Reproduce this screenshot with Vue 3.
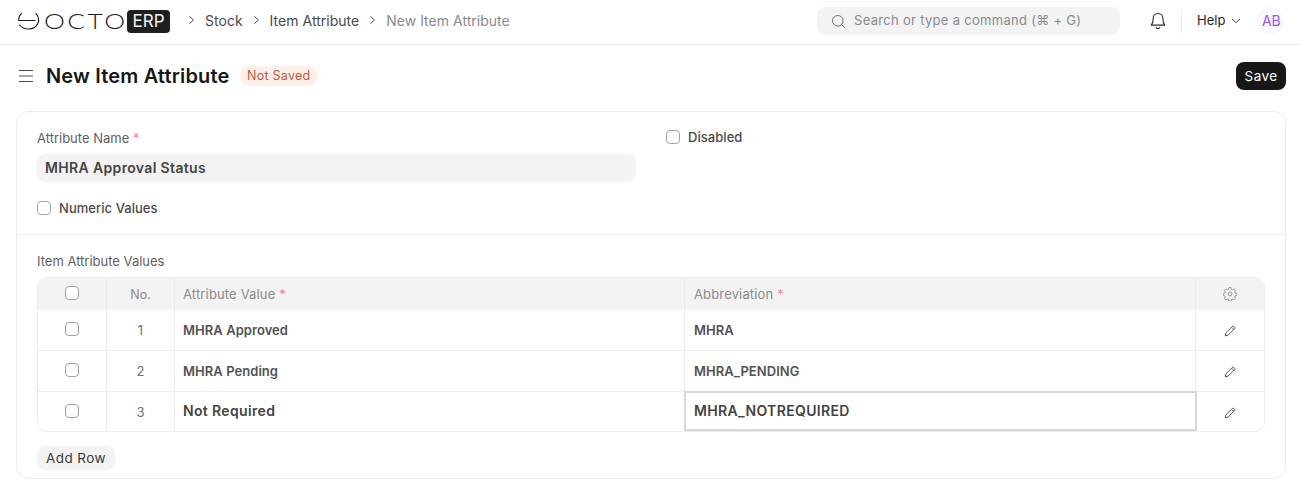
<script setup>
const rows = [
  { no: 1, value: 'MHRA Approved', abbr: 'MHRA' },
  { no: 2, value: 'MHRA Pending', abbr: 'MHRA_PENDING' },
  { no: 3, value: 'Not Required', abbr: 'MHRA_NOTREQUIRED', editing: true },
]
const crumbs = ['Stock', 'Item Attribute']
</script>

<template>
  <div class="page">
    <header class="navbar">
      <div class="logo">
        <svg class="logo-mark" width="22" height="17" viewBox="0 0 22 17" fill="none" stroke="#1f1f1f" stroke-width="1.2" stroke-linecap="round">
          <path d="M3.500.7C1.300 2 .7 4.500.7 7.500H17" />
          <path d="M18 .7c2.200 2.300 3 5 2.500 7.800C19.700 13 15.500 16 10.500 16 6.500 16 3.500 14.500 1.700 12" />
        </svg>
        <span class="logo-word">OCTO</span>
        <span class="logo-erp">ERP</span>
      </div>
      <nav class="crumbs">
        <template v-for="c in crumbs" :key="c">
          <svg class="chev" width="8" height="10" viewBox="0 0 8 10" fill="none" stroke="#4c4c4c" stroke-width="1"><path d="M1.500 1.500 5.500 5l-4 3.500" /></svg>
          <span class="crumb">{{ c }}</span>
        </template>
        <svg class="chev" width="8" height="10" viewBox="0 0 8 10" fill="none" stroke="#4c4c4c" stroke-width="1"><path d="M1.500 1.500 5.500 5l-4 3.500" /></svg>
        <span class="crumb current">New Item Attribute</span>
      </nav>
      <div class="search">
        <svg width="15" height="15" viewBox="0 0 15 15" fill="none" stroke="#6f6f6f" stroke-width="1"><circle cx="6.800" cy="6.800" r="5.300" /><path d="m10.800 10.800 3 3" /></svg>
        <span class="search-text">Search or type a command (⌘ + G)</span>
      </div>
      <svg class="bell" width="16" height="18" viewBox="0 0 16 18" fill="none" stroke="#2a2a2a" stroke-width="1.100" stroke-linejoin="round">
        <path d="M8 1.500c-3 0-4.800 2.200-4.800 5 0 3.600-.5 5-2 6.600h13.600c-1.500-1.600-2-3-2-6.600 0-2.800-1.800-5-4.800-5Z" />
        <path d="M6 15.200c.4 1 1.100 1.400 2 1.400s1.600-.4 2-1.400" />
      </svg>
      <span class="vline"></span>
      <span class="help">Help</span>
      <svg class="help-chev" width="10" height="6" viewBox="0 0 10 6" fill="none" stroke="#555" stroke-width="1"><path d="m1 1 4 3.600L9 1" /></svg>
      <span class="avatar">AB</span>
    </header>

    <div class="head">
      <svg width="14" height="12" viewBox="0 0 14 12" fill="none" stroke="#4c4c4c" stroke-width="1"><path d="M0 .5h14M0 6h14M0 11.500h14" /></svg>
      <h1>New Item Attribute</h1>
      <span class="badge">Not Saved</span>
      <button class="save">Save</button>
    </div>

    <main class="card">
      <section class="top">
        <div class="col">
          <div class="label">Attribute Name <i>*</i></div>
          <div class="input">MHRA Approval Status</div>
          <label class="check numeric"><span class="box"></span>Numeric Values</label>
        </div>
        <div class="col">
          <label class="check disabled"><span class="box"></span>Disabled</label>
        </div>
      </section>

      <section class="bottom">
        <div class="label table-label">Item Attribute Values</div>
        <div class="grid">
          <div class="row header">
            <div class="cell c-check"><span class="box"></span></div>
            <div class="cell c-no">No.</div>
            <div class="cell c-text"><span>Attribute Value <i>*</i></span></div>
            <div class="cell c-text c-abbr"><span>Abbreviation <i>*</i></span></div>
            <div class="cell c-act">
              <svg width="14" height="14" viewBox="0 0 24 24" fill="none" stroke="#8a8a8a" stroke-width="1.500" stroke-linejoin="round">
                <path d="M10.200 1.500h3.600l.6 3 2 .9 2.600-1.600 2.500 2.500-1.600 2.600.9 2 3 .6v3.600l-3 .6-.9 2 1.600 2.600-2.500 2.500-2.600-1.600-2 .9-.6 3h-3.600l-.6-3-2-.9-2.600 1.600-2.500-2.500 1.600-2.600-.9-2-3-.6v-3.600l3-.6.9-2-1.600-2.600 2.500-2.500 2.600 1.600 2-.9Z" transform="translate(0 -.5)" />
                <circle cx="12" cy="12" r="3.200" />
              </svg>
            </div>
          </div>
          <div v-for="r in rows" :key="r.no" class="row body">
            <div class="cell c-check"><span class="box"></span></div>
            <div class="cell c-no">{{ r.no }}</div>
            <div class="cell c-text val" :class="{ big: r.editing }">{{ r.value }}</div>
            <div class="cell c-text c-abbr val" :class="{ big: r.editing, focus: r.editing }">{{ r.abbr }}</div>
            <div class="cell c-act">
              <svg class="pencil" width="12" height="12" viewBox="0 0 12 12" fill="none" stroke="#555" stroke-width="1" stroke-linejoin="round">
                <path d="M1.200 10.800 1.800 8 8.400 1.400a1 1 0 0 1 1.400 0l.8.800a1 1 0 0 1 0 1.400L4 10.200l-2.800.6Z" />
                <path d="m7.600 2.200 2.200 2.200" />
              </svg>
            </div>
          </div>
        </div>
        <button class="add">Add Row</button>
      </section>
    </main>
  </div>
</template>

<style>
html, body { margin: 0; background: #fff; }
</style>

<style scoped>
.page {
  width: 1300px;
  height: 491px;
  overflow: hidden;
  background: #fff;
  font-family: Inter, "Liberation Sans", sans-serif;
  color: #383838;
  font-size: 13px;
}
.navbar {
  box-sizing: content-box;
  border-bottom: 1px solid #ededed;
  display: flex;
  align-items: center;
  padding: 0 0 2px 18px;
  height: 42px;
}
.logo { display: flex; align-items: center; width: 153px; flex: none; }
.logo-mark { flex: none; }
.logo-word {
  display: block;
  width: 83px;
  margin-left: 4px;
  font-family: Lato, sans-serif;
  font-size: 22px;
  font-weight: 300;
  letter-spacing: 2px;
  color: #1f1f1f;
  line-height: 22px;
  transform: scaleX(1.200);
  transform-origin: left center;
  white-space: nowrap;
}
.logo-erp {
  background: #1f1f1f;
  color: #f4f4f4;
  border-radius: 4px;
  font-family: Inter, sans-serif;
  font-size: 17px;
  line-height: 23px;
  height: 23px;
  width: 43px;
  text-align: center;
  flex: none;
}
.crumbs { display: flex; align-items: center; width: 646px; flex: none; font-size: 14px; padding: 0 0 2px 17px; box-sizing: border-box; }
.chev { flex: none; margin-right: 9px; }
.crumb { margin-right: 10px; color: #4a4a4a; letter-spacing: 0.02px; }
.crumb.current { color: #8a8a8a; }
.search {
  width: 303px;
  height: 28px;
  flex: none;
  border-radius: 8px;
  background: #f3f3f3;
  display: flex;
  align-items: center;
  gap: 8px;
  padding-left: 14px;
  box-sizing: border-box;
  color: #8a8a8a;
  font-size: 13px;
  letter-spacing: 0.3px;
}
.search-text { padding-bottom: 2px; }
.bell { margin-left: 30px; flex: none; }
.vline { width: 1px; height: 24px; background: #ededed; margin-left: 15px; flex: none; }
.help { margin-left: 15px; color: #262626; padding-bottom: 2px; }
.help-chev { margin-left: 6px; flex: none; }
.avatar {
  margin-left: 16px;
  width: 28px;
  height: 28px;
  flex: none;
  border-radius: 50%;
  background: #fcf8ff;
  color: #9f55e8;
  display: flex;
  align-items: center;
  justify-content: center;
  font-size: 14px;
  padding-bottom: 2px;
  box-sizing: border-box;
}
.head {
  height: 62px;
  display: flex;
  align-items: center;
  padding: 0 14px 4px 19px;
}
h1 {
  margin: 0 0 0 13px;
  font-size: 20px;
  line-height: 28px;
  font-weight: 600;
  letter-spacing: 0.17px;
  color: #171717;
}
.badge {
  margin-left: 10px;
  height: 20px;
  line-height: 20px;
  padding: 0 7.500px;
  border-radius: 10px;
  background: #fdf0e9;
  color: #c0583a;
  font-size: 12.500px;
  letter-spacing: 0.25px;
}
.save {
  margin-left: auto;
  width: 50px;
  height: 28px;
  padding: 0;
  border: 0;
  border-radius: 8px;
  background: #171717;
  color: #fff;
  font: 13.500px Inter, sans-serif;
  letter-spacing: 0.4px;
}
.card {
  margin: 0 14px 0 16px;
  height: 368px;
  box-sizing: border-box;
  border: 1px solid #ededed;
  border-radius: 12px;
}
.top {
  height: 123px;
  box-sizing: border-box;
  border-bottom: 1px solid #ededed;
  padding: 16px 20px 0;
  display: grid;
  grid-template-columns: 599px 1fr;
  gap: 30px;
}
.label { font-size: 13px; color: #5f5f5f; line-height: 20px; }
.label i, .header i { color: #e88; font-style: normal; }
.input {
  margin-top: 6px;
  height: 28px;
  line-height: 28px;
  border-radius: 8px;
  background: #f3f3f3;
  padding-left: 8px;
  font-weight: 600;
  font-size: 14px;
  letter-spacing: 0.35px;
  color: #444;
}
.check { display: flex; align-items: center; gap: 8px; font-weight: 500; color: #4a4a4a; font-size: 13px; line-height: 20px; letter-spacing: 0.05px; }
.numeric { margin-top: 16px; }
.disabled { margin-top: -1px; }
.box {
  display: block;
  width: 12px;
  height: 12px;
  flex: none;
  border: 1px solid #a3a3a3;
  border-radius: 4px;
  background: #fff;
}
.c-check .box { position: relative; top: -1px; }
.bottom { padding: 16px 20px 0; }
.table-label { line-height: 20px; }
.grid {
  margin-top: 6px;
  border: 1px solid #ededed;
  border-radius: 10px;
  overflow: hidden;
}
.row {
  display: grid;
  grid-template-columns: 69px 68px 510px 511px 1fr;
}
.row.header { height: 32px; background: #f3f3f3; color: #8a8a8a; font-size: 13px; letter-spacing: 0.15px; }
.row.body { height: 41px; border-top: 1px solid #ededed; box-sizing: border-box; }
.row.body:nth-child(2) { height: 40px; border-top: 0; }
.row.body:last-child { height: 40px; }
.cell {
  display: flex;
  align-items: center;
  box-sizing: border-box;
  border-right: 1px solid #ededed;
  min-width: 0;
}
.row.header .cell { border-right-color: #ebebeb; }
.cell:last-child { border-right: 0; }
.c-check, .c-no, .c-act { justify-content: center; }
.c-no { color: #6f6f6f; }
.row.header .c-no { color: #8a8a8a; letter-spacing: 0; font-size: 12.500px; }
.c-text { padding-left: 8px; }
.c-abbr { padding-left: 9px; }
.val { font-weight: 600; font-size: 13px; color: #525252; letter-spacing: 0.05px; }
.val.big { font-size: 14px; color: #444; letter-spacing: 0.35px; padding-bottom: 2px; }
.val.focus { border: 2px solid #d8d8d8; padding-left: 8px; margin: -1px -1px 0 -1px; }
.pencil { position: relative; top: 1px; }
.add {
  display: block;
  margin-top: 14px;
  width: 78px;
  height: 24px;
  padding: 0;
  border: 0;
  border-radius: 8px;
  background: #f3f3f3;
  color: #383838;
  font: 13.500px Inter, sans-serif;
  letter-spacing: 0.4px;
}
</style>
